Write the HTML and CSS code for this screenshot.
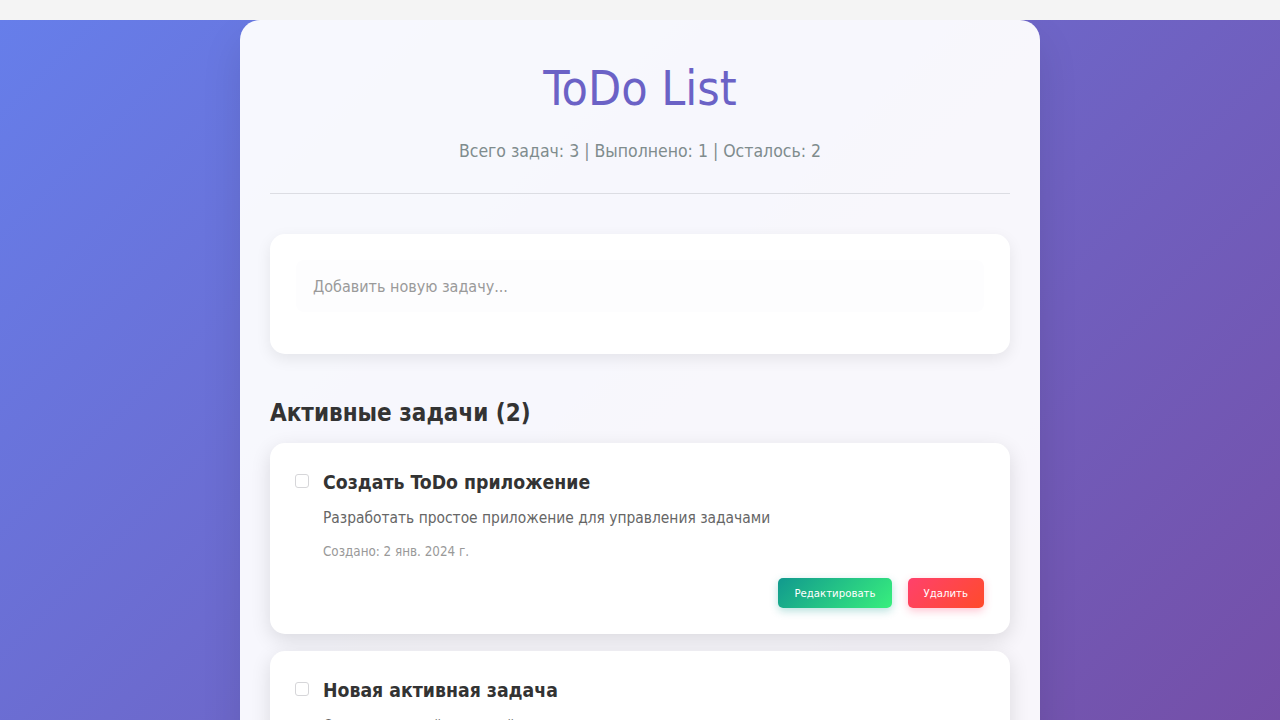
FILE: index.html
```html
<!DOCTYPE html>
<html lang="ru">
<head>
<meta charset="utf-8">
<title>ToDo List</title>
<link rel="stylesheet" href="styles.css">
</head>
<body>
<div class="container">
  <header class="header">
    <h1 class="title">ToDo List</h1>
    <p class="stats">Всего задач: 3 | Выполнено: 1 | Осталось: 2</p>
  </header>
  <div class="add-card">
    <input class="add-input" type="text" placeholder="Добавить новую задачу...">
  </div>
  <h2 class="section-title">Активные задачи (2)</h2>
  <div class="task">
    <input class="task-check" type="checkbox">
    <div class="task-body">
      <h3 class="task-title">Создать ToDo приложение</h3>
      <p class="task-desc">Разработать простое приложение для управления задачами</p>
      <p class="task-date">Создано: 2 янв. 2024 г.</p>
      <div class="task-actions">
        <button class="btn btn-edit">Редактировать</button>
        <button class="btn btn-delete">Удалить</button>
      </div>
    </div>
  </div>
  <div class="task">
    <input class="task-check" type="checkbox">
    <div class="task-body">
      <h3 class="task-title">Новая активная задача</h3>
      <p class="task-desc">Описание новой активной задачи</p>
      <p class="task-date">Создано: 3 янв. 2024 г.</p>
      <div class="task-actions">
        <button class="btn btn-edit">Редактировать</button>
        <button class="btn btn-delete">Удалить</button>
      </div>
    </div>
  </div>
</div>
</body>
</html>
```
FILE: styles.css
```css
html {
  background: #f4f4f4;
}
body {
  margin: 20px 0 0;
  min-height: 700px;
  background: linear-gradient(135deg, #667eea 0%, #764ba2 100%);
  font-family: "DejaVu Sans Condensed", "DejaVu Sans", sans-serif;
  color: #333;
}
.container {
  width: 740px;
  margin: 0 auto;
  padding: 30px;
  background: rgba(255, 255, 255, 0.95);
  border-radius: 20px;
  box-shadow: 0 20px 40px rgba(0, 0, 0, 0.1);
}
.header {
  text-align: center;
  border-bottom: 1px solid #dcdde3;
  padding-bottom: 30px;
  margin-bottom: 40px;
}
.title {
  margin: 6px 0 0;
  font-size: 48px;
  font-weight: normal;
  line-height: 64px;
  color: #6b62c6;
}
.stats {
  margin: 19px 0 0;
  font-size: 17.5px;
  line-height: 24px;
  color: #7f8c8d;
}
.add-card {
  background: #fff;
  border-radius: 15px;
  padding: 26px 26px 42px;
  box-shadow: 0 5px 15px rgba(0, 0, 0, 0.08);
  margin-bottom: 43px;
}
.add-input {
  display: block;
  box-sizing: border-box;
  width: 100%;
  height: 52px;
  padding: 0 17px;
  border: none;
  border-radius: 8px;
  background: #fdfdfe;
  font-family: inherit;
  font-size: 16px;
  color: #333;
  outline: none;
}
.add-input::placeholder {
  color: #9a9a9a;
}
.section-title {
  margin: 0 0 14px;
  font-size: 24px;
  line-height: 32px;
  font-weight: bold;
  color: #333;
}
.task {
  display: flex;
  gap: 14px;
  background: #fff;
  border-radius: 15px;
  padding: 25px 26px 26px 25px;
  box-shadow: 0 6px 20px rgba(0, 0, 0, 0.12);
  margin-bottom: 17px;
}
.task-check {
  appearance: none;
  -webkit-appearance: none;
  box-sizing: border-box;
  margin: 6px 0 0;
  width: 14px;
  height: 14px;
  flex: none;
  border: 1px solid #d6d6d9;
  border-radius: 3px;
  background: #fff;
}
.task-body {
  flex: 1;
}
.task-title {
  margin: 3px 0 0;
  font-size: 19.3px;
  line-height: 24px;
  font-weight: bold;
  color: #333;
}
.task-desc {
  margin: 12px 0 0;
  font-size: 15.4px;
  line-height: 22px;
  color: #666;
}
.task-date {
  margin: 14px 0 0;
  font-size: 13.3px;
  line-height: 18px;
  color: #999;
}
.task-actions {
  display: flex;
  justify-content: flex-end;
  gap: 16px;
  margin-top: 17px;
}
.btn {
  height: 30px;
  padding: 0 16px;
  border: none;
  border-radius: 5px;
  font-family: inherit;
  font-size: 11.3px;
  color: #fff;
}
.btn-edit {
  background: linear-gradient(135deg, #11998e, #38ef7d);
  box-shadow: 0 3px 8px rgba(17, 153, 142, 0.3);
}
.btn-delete {
  background: linear-gradient(135deg, #ff416c, #ff4b2b);
  box-shadow: 0 3px 8px rgba(255, 65, 108, 0.3);
}
```
